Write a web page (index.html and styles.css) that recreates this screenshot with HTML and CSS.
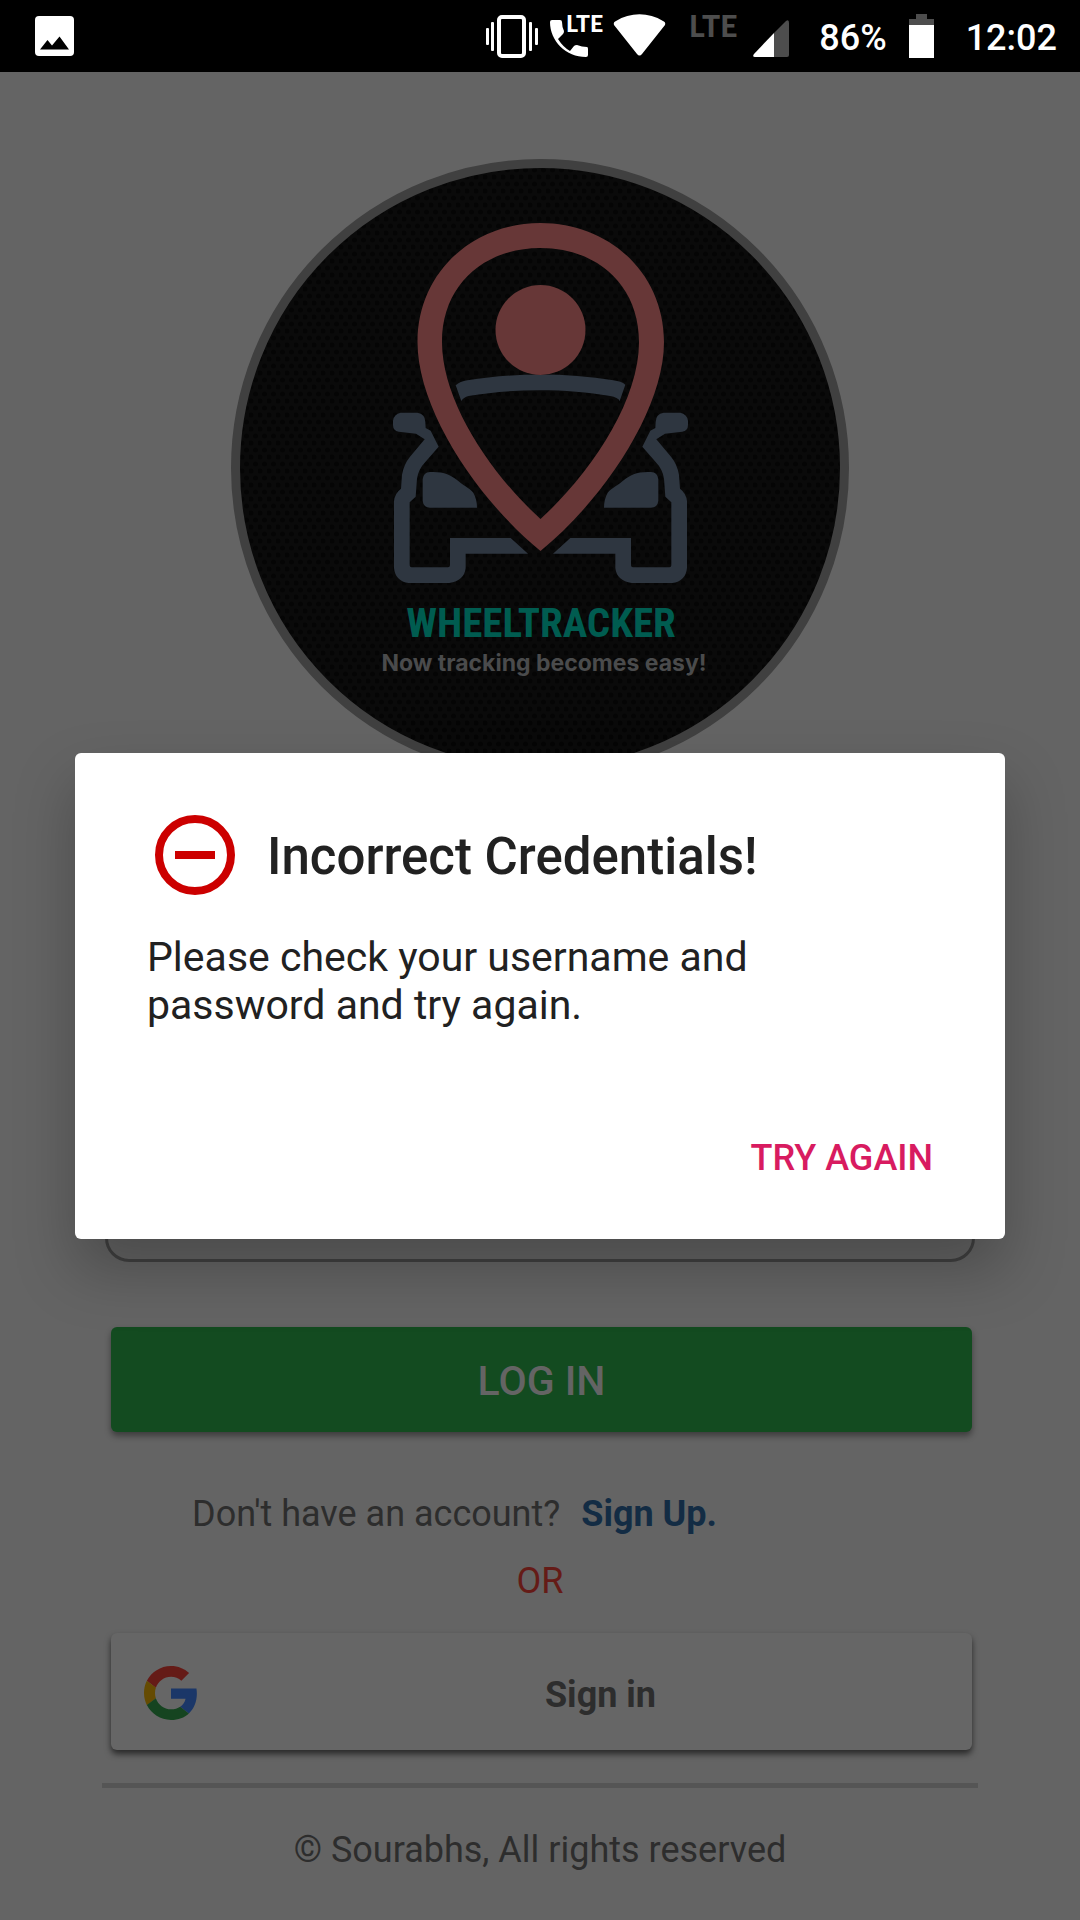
FILE: index.html
```html
<!DOCTYPE html>
<html lang="en">
<head>
<meta charset="utf-8">
<meta name="viewport" content="width=device-width, initial-scale=1">
<title>WheelTracker</title>
<link rel="stylesheet" href="styles.css">
</head>
<body>
<header class="status">
  <svg class="picture" viewBox="0 0 39 40" width="39" height="40" aria-hidden="true"><rect width="39" height="40" rx="4" fill="#fff"/><path d="M5 33.500L12.500 24L17 29.500L24.500 20.500L34 33.500Z" fill="#000"/></svg>
  <svg viewBox="486 0 180 72" width="180" height="72" aria-hidden="true" fill="#fff">
    <rect x="499" y="17" width="25" height="39" rx="3" fill="none" stroke="#fff" stroke-width="4"/>
    <rect x="486" y="28" width="3" height="17" rx="1"/><rect x="491" y="22" width="3" height="29" rx="1"/>
    <rect x="529" y="22" width="3" height="29" rx="1"/><rect x="535" y="28" width="3" height="17" rx="1"/>
    <path d="M552 20H560Q562 20 562 22Q562 27 564 31Q564 33 563 34L558 39Q563 47 570 51L574 46Q575 45 577 45Q582 47 587 47Q588 47 588 49V55Q588 57 586 57C566 57 550 41 550 22Q550 20 552 20Z"/>
    <text class="lte" x="566" y="32" font-size="23">LTE</text>
    <path d="M614 25Q613 22 616 21C630 12 649 12 663 21Q666 22 665 25L642 54Q639.500 57 637 54Z"/>
  </svg>
  <svg class="signal" viewBox="690 0 100 72" width="100" height="72" aria-hidden="true">
    <text class="lte" x="689" y="37" font-size="30" fill="#4d4d4d">LTE</text>
    <path d="M774 33L786 21Q789 19 789 23V55Q789 57 787 57H774Z" fill="#4d4d4d"/>
    <path d="M774 33V57H755Q752 57 754 54Z" fill="#fff"/>
  </svg>
  <span class="percent">86%</span>
  <svg viewBox="0 0 25 44" width="25" height="44" aria-hidden="true"><path d="M7 0H18V5H25V11H0V5H7Z" fill="#4d4d4d"/><path d="M0 11H25V44H0Z" fill="#fff"/></svg>
  <span class="clock">12:02</span>
</header>

<main class="screen">
  <svg class="logo" viewBox="0 0 618 618" role="img" aria-label="WheelTracker logo">
    <defs>
      <pattern id="mesh" width="9" height="14" patternUnits="userSpaceOnUse"><circle cx="2" cy="4" r="2.500"/><circle cx="6.500" cy="11" r="2.500"/></pattern>
      <g id="side">
        <path d="M62 218H112Q136 222 136 246L137 264L152 272L176 320L136 366Q115 388 111 416L107 470L89 487V676Q89 682 95 682H204Q210 682 210 676V594H392L444 641H257V684Q253 722 208 729H86Q46 724 42 684V484Q44 460 63 446L66 404Q72 372 90 350L134 298L108 281L56 275Q39 272 39 255V242Q42 222 62 218Z"/>
        <path d="M150 396C190 394 212 404 232 421C258 442 272 448 280 458Q291 478 291 503H150Q130 502 128 482V418Q130 397 150 396Z"/>
      </g>
    </defs>
    <circle cx="309" cy="309" r="305" fill="#0a0a0a"/>
    <circle cx="309" cy="309" r="305" fill="url(#mesh)" class="mesh"/>
    <circle cx="309" cy="309" r="304.500" fill="none" stroke="#404040" stroke-width="9"/>
    <g transform="translate(149 181) scale(.33333)" fill="#2e3640">
      <use href="#side"/>
      <use href="#side" transform="translate(963 0) scale(-1 1)"/>
      <path d="M227 136Q240 124 262 121C400 98 560 98 700 121Q724 124 736 134L719 183Q714 172 690 168C560 145 400 145 266 168Q250 172 244 183Z"/>
    </g>
    <g transform="translate(-231 -159)" fill="#673737">
      <path fill-rule="evenodd" d="M540.500 551C478 500 417.500 410 417.500 342C417.500 273 472 223 540.500 223S664 273 664 342C664 410 603 500 540.500 551ZM540.500 519C590 474 639 402 639 342C639 285 597 248 540.500 248S442 285 442 342C442 402 491 474 540.500 519Z"/>
      <ellipse cx="540.500" cy="330" rx="45" ry="45"/>
    </g>
    <text class="brand" x="310" y="478">WHEELTRACKER</text>
    <text class="tagline" x="313" y="512">Now tracking becomes easy!</text>
  </svg>

  <form class="login">
    <input class="field" type="text" aria-label="Username">
    <input class="field" type="password" aria-label="Password">
    <button class="button submit" type="button">LOG IN</button>
  </form>
  <p class="signup">Don't have an account? <a href="#signup">Sign Up.</a></p>
  <p class="or">OR</p>
  <button class="button google" type="button">
    <svg viewBox="0 0 48 48" width="54" height="54" aria-hidden="true">
      <path fill="#651b17" d="M24 9.500c3.540 0 6.710 1.220 9.210 3.600l6.850-6.850C35.900 2.380 30.470 0 24 0 14.620 0 6.510 5.380 2.560 13.220l7.980 6.190C12.430 13.720 17.740 9.500 24 9.500z"/>
      <path fill="#1b3768" d="M46.980 24.550c0-1.570-.15-3.090-.38-4.550H24v9.020h12.940c-.58 2.960-2.260 5.480-4.780 7.180l7.730 6c4.510-4.180 7.090-10.360 7.090-17.650z"/>
      <path fill="#654b02" d="M10.530 28.590c-.48-1.450-.76-2.990-.76-4.590s.27-3.140.76-4.590l-7.980-6.190C.92 16.460 0 20.120 0 24c0 3.880.92 7.540 2.560 10.780l7.970-6.190z"/>
      <path fill="#154420" d="M24 48c6.480 0 11.930-2.130 15.890-5.810l-7.730-6c-2.150 1.450-4.920 2.300-8.160 2.300-6.260 0-11.570-4.220-13.470-9.910l-7.980 6.190C6.510 42.620 14.620 48 24 48z"/>
    </svg>
    <span class="google-label">Sign in</span>
  </button>
  <footer class="footer">© Sourabhs, All rights reserved</footer>
</main>

<div class="overlay">
  <section class="dialog" role="alertdialog" aria-modal="true" aria-labelledby="title" aria-describedby="message">
    <div class="heading">
      <svg viewBox="0 0 96 96" width="96" height="96" aria-hidden="true"><circle cx="48" cy="48" r="36" fill="none" stroke="#c00" stroke-width="8"/><path d="M28 44H68V52H28Z" fill="#c00"/></svg>
      <h2 class="title" id="title">Incorrect Credentials!</h2>
    </div>
    <p class="message" id="message">Please check your username and password and try again.</p>
    <button class="retry" type="button">TRY AGAIN</button>
  </section>
</div>
</body>
</html>
```
FILE: styles.css
```css
* {
  box-sizing: border-box;
}

body {
  position: relative;
  min-height: 100vh;
  margin: 0;
  background: #646464;
  color: #2d2d2d;
  font: 36px/42px Roboto, sans-serif;
}

p,
h2 {
  margin: 0;
}

button {
  border: 0;
  font: inherit;
  cursor: pointer;
}

.status {
  display: flex;
  align-items: center;
  height: 72px;
  padding: 0 23px 0 35px;
  background: #000;
  color: #fff;
  font-weight: 500;
}

.picture {
  margin-right: auto;
}

.signal {
  margin: 0 29px 0 24px;
}

.percent {
  margin-right: 22px;
  padding-top: 3px;
}

.clock {
  margin-left: 32px;
  padding-top: 3px;
}

.lte {
  font-family: Lato, sans-serif;
  font-weight: 900;
}

.screen {
  display: flex;
  flex-direction: column;
  padding: 87px 102px 32px;
}

.logo {
  align-self: center;
  width: 618px;
  max-width: 100%;
}

.mesh {
  opacity: 0.5;
}

.brand {
  fill: #005c50;
  font-family: "Liberation Sans Narrow", "Roboto Condensed", Roboto, sans-serif;
  font-size: 41px;
  font-weight: 700;
  text-anchor: middle;
}

.tagline {
  fill: #4a4b4c;
  font-family: Inter, sans-serif;
  font-size: 23px;
  font-weight: 700;
  text-anchor: middle;
}

.login {
  display: flex;
  flex-direction: column;
  gap: 24px;
  padding: 221px 3px 0;
}

.field {
  height: 120px;
  padding: 0 30px;
  border: 3px solid #404040;
  border-radius: 24px;
  background: transparent;
  font: inherit;
}

.button {
  margin: 0 3px 0 6px;
  border-radius: 6px;
}

.submit {
  height: 105px;
  margin-top: 41px;
  padding-top: 4px;
  background: #134b20;
  box-shadow: 0 4px 6px rgba(0, 0, 0, 0.4);
  color: #646464;
  font-size: 41px;
  font-weight: 500;
}

.signup {
  margin: 61px 0 0 90px;
}

.signup a {
  margin-left: 12px;
  color: #132c44;
  font-weight: 700;
  text-decoration: none;
}

.or {
  margin-top: 25px;
  color: #651b17;
  text-align: center;
}

.google {
  display: flex;
  align-items: center;
  height: 117px;
  margin: 31px 6px 33px 9px;
  padding: 2px 33px 0;
  background: #666;
  box-shadow: 0 4px 6px rgba(0, 0, 0, 0.6);
  color: #2d2d2d;
  font-weight: 700;
}

.google-label {
  flex: 1;
  padding: 4px 0 0 64px;
}

.footer {
  padding-top: 41px;
  border-top: 5px solid #555;
  text-align: center;
}

.overlay {
  position: absolute;
  inset: 72px 0 0;
  display: flex;
  align-items: center;
  padding: 0 75px;
}

.dialog {
  display: flex;
  flex: 1;
  flex-direction: column;
  padding: 54px 72px 24px;
  border-radius: 6px;
  background: #fff;
  box-shadow: 0 30px 60px rgba(0, 0, 0, 0.25);
  color: #212121;
}

.heading {
  display: flex;
  align-items: center;
  gap: 24px;
}

.title {
  padding-top: 4px;
  font-size: 51px;
  font-weight: 500;
  line-height: 60px;
}

.message {
  max-width: 700px;
  margin-top: 30px;
  font-size: 41px;
  line-height: 48px;
}

.retry {
  align-self: flex-end;
  margin-top: 72px;
  padding: 36px 0;
  background: transparent;
  color: #d81b60;
  font-weight: 500;
}
```
